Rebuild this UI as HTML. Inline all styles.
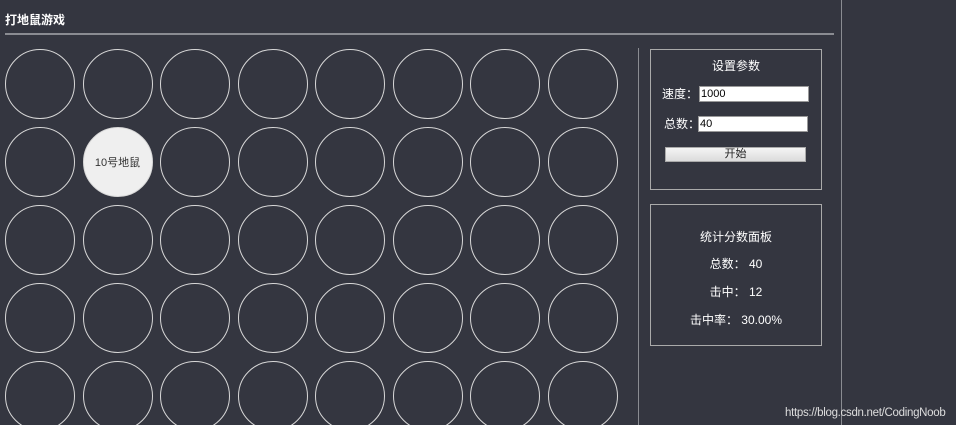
<!DOCTYPE html>
<html><head><meta charset="utf-8"><style>
html,body{margin:0;width:956px;height:425px;overflow:hidden}
body{background:#343640;position:relative;font-family:"Liberation Sans","Noto Sans CJK SC",sans-serif;color:#fff;font-size:12px}
.a{position:absolute;line-height:14px}
.c{position:absolute;width:68px;height:68px;border:1px solid #d8d8d8;border-radius:50%;box-sizing:content-box}
.c.w{background:#efefef;color:#333;display:flex;align-items:center;justify-content:center;font-size:11px}
.p{position:absolute;border:1px solid #aaa;box-sizing:border-box}
input{position:absolute;border:1px solid #999;background:#fff;font-size:11px;padding:0 1px;height:16px;box-sizing:border-box;font-family:"Liberation Sans",sans-serif;color:#000}
</style></head><body>
<div class="a" style="left:5px;top:13px;font-weight:bold;font-size:12px">打地鼠游戏</div>
<div class="a" style="left:5px;top:33px;width:829px;height:2px;background:#8a8c92"></div>
<div class="a" style="left:638px;top:48px;width:1px;height:377px;background:#8a8c92"></div>
<div class="a" style="left:841px;top:0;width:1px;height:425px;background:#8a8c92"></div>
<div id="g"></div>
<div class="p" style="left:650px;top:49px;width:172px;height:141px"></div>
<div class="a" style="left:650px;top:59px;width:172px;text-align:center;font-size:12px">设置参数</div>
<div class="a" style="left:662px;top:87px">速度：</div>
<input style="left:699px;top:86px;width:110px" value="1000">
<div class="a" style="left:664px;top:117px">总数：</div>
<input style="left:698px;top:116px;width:110px" value="40">
<div class="a" style="left:665px;top:147px;width:141px;height:15px;background:linear-gradient(#f4f4f4,#dcdcdc);border:1px solid #aaa;box-sizing:border-box;color:#222;font-size:11px;text-align:center;line-height:13px">开始</div>
<div class="p" style="left:650px;top:204px;width:172px;height:142px"></div>
<div class="a" style="left:650px;top:230px;width:172px;text-align:center;font-size:12px">统计分数面板</div>
<div class="a" style="left:650px;top:257px;width:172px;text-align:center">总数： 40</div>
<div class="a" style="left:650px;top:285px;width:172px;text-align:center">击中： 12</div>
<div class="a" style="left:650px;top:313px;width:172px;text-align:center">击中率： 30.00%</div>
<div class="a" style="left:785px;top:406px;color:#ddd;font-size:11.5px;letter-spacing:-0.3px">https://blog.csdn.net/CodingNoob</div>
<script>
var g=document.getElementById('g'),h='';
for(var r=0;r<5;r++)for(var c=0;c<8;c++){
var x=5+c*77.5,y=49+r*78,w=(r==1&&c==1);
h+='<div class="c'+(w?' w':'')+'" style="left:'+x+'px;top:'+y+'px">'+(w?'10号地鼠':'')+'</div>';}
g.innerHTML=h;
</script>
</body></html>
